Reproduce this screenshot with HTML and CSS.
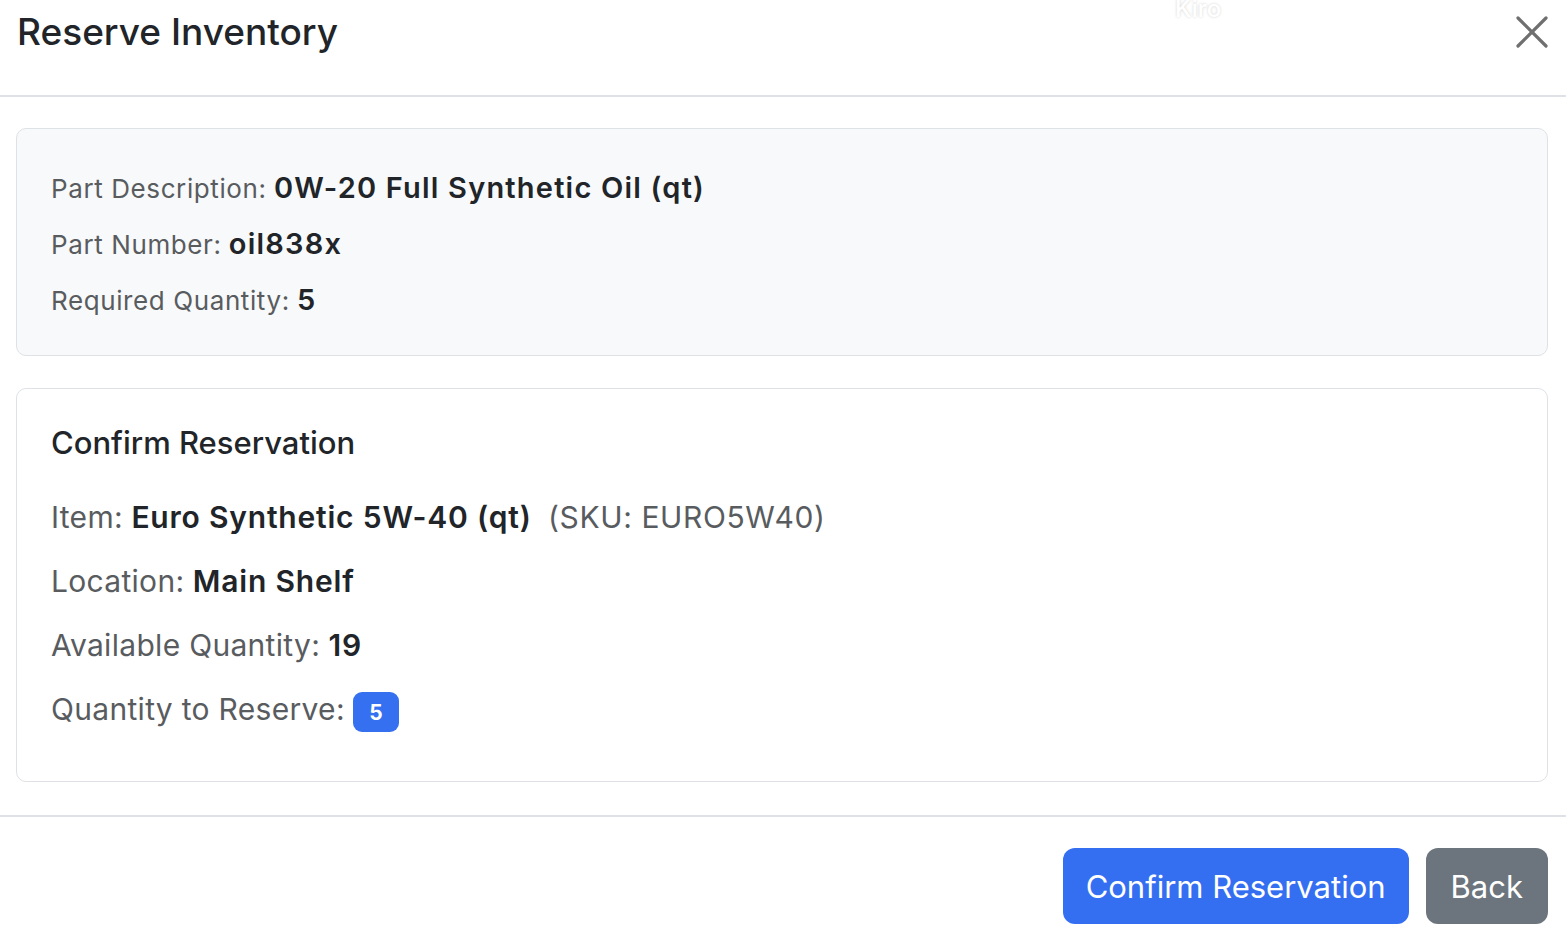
FILE: index.html
```html
<!DOCTYPE html>
<html lang="en">
<head>
  <meta charset="UTF-8" />
  <meta name="viewport" content="width=device-width, initial-scale=1.0"/>
  <title>Reserve Inventory</title>
  <link rel="stylesheet" href="styles.css">
</head>
<body>
  <div class="modal">
    <div class="modal-header">
      <h5 class="modal-title">Reserve Inventory</h5>
      <span class="watermark">Kiro</span>
      <button class="btn-close" aria-label="Close">
        <svg width="32" height="32" viewBox="0 0 32 32">
          <path d="M2 2 L30 30 M30 2 L2 30" stroke="#6f6f6f" stroke-width="3.2" stroke-linecap="round" fill="none"/>
        </svg>
      </button>
    </div>

    <div class="modal-body">
      <div class="card card-light">
        <div class="row-sm"><span class="label">Part Description:</span> <strong class="val-sm">0W-20 Full Synthetic Oil (qt)</strong></div>
        <div class="row-sm"><span class="label">Part Number:</span> <strong class="val-sm">oil838x</strong></div>
        <div class="row-sm"><span class="label">Required Quantity:</span> <strong class="val-sm">5</strong></div>
      </div>

      <div class="card">
        <h6 class="card-title">Confirm Reservation</h6>
        <div class="row-lg"><span class="label">Item:</span> <strong>Euro Synthetic 5W-40 (qt)</strong> <span class="sku">(SKU: EURO5W40)</span></div>
        <div class="row-lg"><span class="label">Location:</span> <strong>Main Shelf</strong></div>
        <div class="row-lg"><span class="label">Available Quantity:</span> <strong>19</strong></div>
        <div class="row-lg"><span class="label">Quantity to Reserve:</span> <span class="badge">5</span></div>
      </div>
    </div>

    <div class="modal-footer">
      <button class="btn btn-primary">Confirm Reservation</button>
      <button class="btn btn-secondary">Back</button>
    </div>
  </div>
</body>
</html>
```

FILE: styles.css
```css
body {
  margin: 0;
  font-family: Inter, "Noto Sans", sans-serif;
  color: #212529;
  background: #fff;
}
.modal { width: 1566px; }

.modal-header {
  position: relative;
  height: 85px;
  padding: 10px 18px 0 17px;
  display: flex;
  justify-content: space-between;
  align-items: flex-start;
  border-bottom: 2px solid #dee2e6;
}
.modal-title {
  margin: 0;
  font-size: 37px;
  font-weight: 500;
  line-height: 1.2;
  color: #212529;
}
.watermark {
  position: absolute;
  left: 1175px;
  top: -6px;
  font-size: 24px;
  font-weight: 500;
  color: #fff;
  text-shadow: 0 0 3px rgba(0, 0, 0, 0.18);
}
.btn-close {
  margin-top: 6px;
  padding: 0;
  border: 0;
  background: none;
  width: 32px;
  height: 32px;
  cursor: pointer;
}
.btn-close svg { display: block; }

.modal-body {
  padding: 31px 18px 33px 16px;
  display: flex;
  flex-direction: column;
  gap: 32px;
}
.card {
  border: 1px solid #dee2e6;
  border-radius: 10px;
  background: #fff;
  padding: 35px 34px 40px;
}
.card-light {
  background: #f8f9fa;
  padding: 32px 34px 26px;
}
.label { color: #595c5f; }
strong { font-weight: 600; color: #212529; }

.row-sm {
  font-size: 26px;
  line-height: 56px;
}
.row-sm .label { letter-spacing: 0.6px; }
.val-sm { font-size: 29px; line-height: 1; letter-spacing: 1.2px; }

.card-title {
  margin: 0 0 24px;
  font-size: 31px;
  font-weight: 500;
  line-height: 1.2;
}
.row-lg {
  font-size: 30px;
  line-height: 64px;
}
.row-lg .label { letter-spacing: 0.3px; }
.row-lg strong { line-height: 1; letter-spacing: 0.8px; }
.sku { color: #595c5f; margin-left: 8px; letter-spacing: 0.6px; }
.badge {
  display: inline-block;
  padding: 10px 16px 9px;
  font-size: 21px;
  line-height: 21px;
  font-weight: 700;
  color: #fff;
  background: #3470f0;
  border-radius: 9px;
}

.modal-footer {
  border-top: 2px solid #dee2e6;
  padding: 31px 18px 20px;
  display: flex;
  justify-content: flex-end;
  gap: 17px;
}
.btn {
  height: 76px;
  padding: 0 23px;
  border: 0;
  border-radius: 12px;
  font-family: inherit;
  font-size: 31px;
  color: #fff;
  cursor: pointer;
}
.btn-secondary { padding: 0 25px; background: #6c757d; }
.btn-primary { background: #346ff2; }
```
